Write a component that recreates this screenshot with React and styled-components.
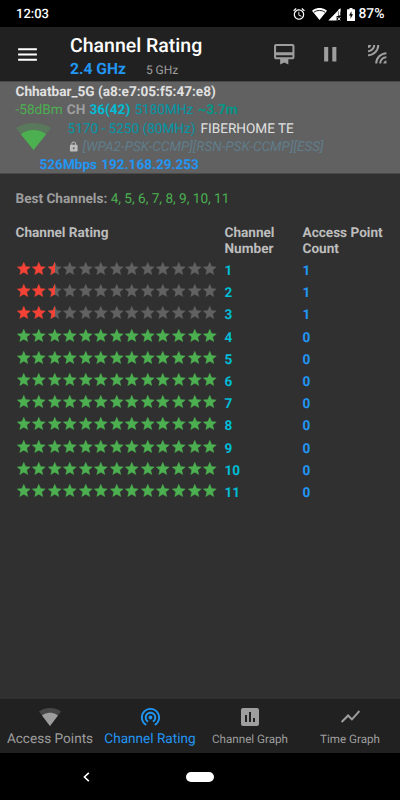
import React from 'react'
import styled, { createGlobalStyle } from 'styled-components'
import {
    MdMenu,
    MdOutlineCardMembership,
    MdPause,
    MdLeakAdd,
    MdAlarm,
    MdLock,
    MdWifiTethering,
    MdInsertChart,
    MdShowChart,
} from 'react-icons/md'

const GlobalStyle = createGlobalStyle`
    * {
        box-sizing: border-box;
    }

    body {
        margin: 0;
        background-color: #000;
        font-family: Roboto, sans-serif;
        text-rendering: geometricPrecision;
    }

    svg {
        display: block;
        flex: none;
    }
`

const Screen = styled.div`
    width: 400px;
    height: 800px;
    display: flex;
    flex-direction: column;
    overflow: hidden;
    background-color: #303030;
    white-space: nowrap;
`

const StatusBar = styled.header`
    height: 27px;
    flex: none;
    display: flex;
    align-items: center;
    padding: 1px 15.5px 0 16px;
    background-color: #000;
    color: #fff;
    font-size: 13px;
    font-weight: 500;
`

const StatusIcons = styled.div`
    display: flex;
    align-items: center;
    margin-left: auto;
`

const StatusGap = styled.span`
    width: ${({ $width }) => $width}px;
`

const Battery = styled.span`
    margin-left: 3.5px;
    font-size: 13.9px;
`

const Toolbar = styled.div`
    height: 54px;
    flex: none;
    display: flex;
    align-items: center;
    padding: 0 11px 0 15px;
    background-color: #212121;
    color: #9e9e9e;
`

const MenuButton = styled.div`
    width: 55px;
    color: #fff;
`

const Titles = styled.div`
    flex: 1;
    align-self: flex-start;
    padding-top: 7px;
`

const Title = styled.div`
    color: #fff;
    font-size: 19.5px;
    font-weight: 500;
    line-height: 24px;
`

const Bands = styled.div`
    display: flex;
    align-items: baseline;
    gap: 20px;
    line-height: 23px;
`

const Band = styled.span`
    color: ${({ $active }) => ($active ? '#2196f3' : '#9e9e9e')};
    font-size: ${({ $active }) => ($active ? '15.6px' : '12px')};
    font-weight: ${({ $active }) => ($active ? 700 : 400)};
`

const Actions = styled.div`
    display: flex;
    align-items: center;
    gap: 22px;
`

const Connection = styled.section`
    height: 93px;
    flex: none;
    padding: 1px 15.5px 0;
    background-color: #616161;
    border-top: 1px solid #484848;
    border-bottom: 1px solid #4a4a4a;
    font-size: 13.6px;
    line-height: 18.2px;
`

const InfoLine = styled.div`
    height: 18.3px;
    display: flex;
    align-items: center;
    gap: ${({ $gap }) => $gap || '4.2px'};
    padding-left: ${({ $indent }) => $indent || 0};
`

const InfoBody = styled.div`
    display: flex;
`

const SignalBox = styled.div`
    width: 52px;
    padding-top: 3px;
`

const Ink = styled.span`
    color: ${({ $color }) => $color};
    font-weight: ${({ $bold }) => ($bold ? 700 : 400)};
    font-style: ${({ $italic }) => ($italic ? 'italic' : 'normal')};
`

const Content = styled.main`
    flex: 1;
    padding: 16px 15.5px 0;
    color: #bdbdbd;
    font-size: 13.6px;
`

const BestChannels = styled.div`
    line-height: 18px;
    margin-bottom: 17px;
`

const Grid = styled.div`
    display: grid;
    grid-template-columns: 209px 78px 1fr;
`

const HeadCell = styled.div`
    height: 36px;
    padding-top: 1px;
    font-weight: 700;
    line-height: 15.7px;
`

const Stars = styled.div`
    height: 22.2px;
    display: flex;
`

const StarBox = styled.div`
    width: 15.56px;
    height: 15.56px;
    position: relative;
    color: ${({ $color }) => $color};
`

const HalfStar = styled.div`
    position: absolute;
    top: 0;
    left: 0;
    width: 56%;
    overflow: hidden;
    color: #f44336;
`

const NumberCell = styled.div`
    height: 22.2px;
    color: ${({ $color }) => $color};
    font-weight: 700;
    line-height: 20px;
`

const BottomNav = styled.nav`
    height: 54px;
    flex: none;
    display: grid;
    grid-template-columns: repeat(4, 100px);
    background-color: #212121;
`

const NavItem = styled.div`
    display: flex;
    flex-direction: column;
    align-items: center;
    justify-content: space-between;
    padding: ${({ $top }) => $top || '6px'} 0 4.5px;
    color: ${({ $active }) => ($active ? '#2196f3' : '#9e9e9e')};
    font-size: ${({ $small }) => ($small ? '11.65px' : '13.6px')};
    line-height: 20px;
`

const SystemNav = styled.footer`
    height: 47px;
    flex: none;
    display: flex;
    align-items: center;
    padding: 0 0 0 82px;
    background-color: #000;
`

const HomePill = styled.div`
    width: 28px;
    height: 10px;
    margin-left: 96px;
    border-radius: 5px;
    background-color: #fff;
`

const GREEN = '#4caf50'
const STAR_COUNT = 13

const channels = [
    { number: 1, rating: 2.5, count: 1 },
    { number: 2, rating: 2.5, count: 1 },
    { number: 3, rating: 2.5, count: 1 },
    ...[4, 5, 6, 7, 8, 9, 10, 11].map((number) => ({ number, rating: 13, count: 0 })),
]

// wifi fan: faded full wedge with the current level on top
function WifiFan({ width, height }) {
    return (
        <svg width={width} height={height} viewBox="0 0 24 19" preserveAspectRatio="none" fill="currentColor">
            <path d="M12 19L24 3.6C23.5 3.2 19 0 12 0S.5 3.2 0 3.6z" fillOpacity="0.3" />
            <path d="M12 19L20.7 8C20.3 7.7 17 5 12 5S3.7 7.7 3.3 8z" />
        </svg>
    )
}

function StatusWifiIcon() {
    return (
        <svg width="15" height="12" viewBox="0 0 15 12">
            <path d="M7.5 12L15 2.7C14.6 2.4 12 0 7.5 0S.4 2.4 0 2.7z" fill="#fff" />
            <path d="M2 4.2C5 1.9 10 1.9 13 4.2" fill="none" stroke="#000" strokeWidth="0.9" />
        </svg>
    )
}

function SignalIcon() {
    return (
        <svg width="13" height="13" viewBox="0 0 13 13">
            <path d="M12.5 0v3.5h-2.2V8H8.6v4.5H.3z" fill="#fff" />
            <path d="M11.5 1v6.5" stroke="#fff" strokeWidth="1.6" />
            <path d="M9.6 9.3l2.8 3M12.4 9.3l-2.8 3" stroke="#fff" strokeWidth="1" />
        </svg>
    )
}

function BatteryIcon() {
    return (
        <svg width="8" height="13" viewBox="0 0 8 13">
            <path d="M2.5 0h3v1.3H7.5q.5 0 .5.5v10.7q0 .5-.5.5h-7q-.5 0-.5-.5V1.8q0-.5.5-.5h2z" fill="#fff" />
            <path d="M4.5 3.2L2 7.6h1.5v3.1l2.5-4.4H4.5z" fill="#000" />
        </svg>
    )
}

function Star() {
    return (
        <svg width="15.56" height="15.56" viewBox="0 0 24 24" fill="currentColor" stroke="currentColor" strokeWidth="0.7">
            <path d="M12 17.27L18.18 21l-1.64-7.03L22 9.24l-7.19-.61L12 2 9.19 8.63 2 9.24l5.46 4.73L5.82 21z" />
        </svg>
    )
}

function StarRow({ rating }) {
    const full = rating === STAR_COUNT ? GREEN : '#f44336'

    return (
        <Stars>
            {Array.from({ length: STAR_COUNT }, (_, i) => (
                <StarBox key={i} $color={i + 1 <= rating ? full : '#616161'}>
                    <Star />
                    {rating - i === 0.5 && (
                        <HalfStar>
                            <Star />
                        </HalfStar>
                    )}
                </StarBox>
            ))}
        </Stars>
    )
}

const App = () => {
    return (
        <Screen>
            <GlobalStyle />
            <StatusBar>
                <span>12:03</span>
                <StatusIcons>
                    <MdAlarm size={14} />
                    <StatusGap $width={6} />
                    <StatusWifiIcon />
                    <StatusGap $width={1} />
                    <SignalIcon />
                    <StatusGap $width={6} />
                    <BatteryIcon />
                    <Battery>87%</Battery>
                </StatusIcons>
            </StatusBar>

            <Toolbar>
                <MenuButton>
                    <MdMenu size={25} />
                </MenuButton>
                <Titles>
                    <Title>Channel Rating</Title>
                    <Bands>
                        <Band $active>2.4 GHz</Band>
                        <Band>5 GHz</Band>
                    </Bands>
                </Titles>
                <Actions>
                    <MdOutlineCardMembership size={24.5} />
                    <MdPause size={24.5} />
                    <MdLeakAdd size={24.5} />
                </Actions>
            </Toolbar>

            <Connection>
                <InfoLine>
                    <Ink $color="#e0e0e0" $bold>Chhatbar_5G (a8:e7:05:f5:47:e8)</Ink>
                </InfoLine>
                <InfoLine>
                    <Ink $color={GREEN}>-58dBm</Ink>
                    <Ink $color="#9e9e9e" $bold>CH</Ink>
                    <Ink $color="#00bcd4" $bold>36(42)</Ink>
                    <Ink $color="#0097a7">5180MHz</Ink>
                    <Ink $color="#009688" $bold>~3.7m</Ink>
                </InfoLine>
                <InfoBody>
                    <SignalBox>
                        <Ink as="div" $color={GREEN}>
                            <WifiFan width={35} height={27} />
                        </Ink>
                    </SignalBox>
                    <div>
                        <InfoLine $gap="5px">
                            <Ink $color="#0097a7">5170 - 5250 (80MHz)</Ink>
                            <Ink $color="#e0e0e0">FIBERHOME TE</Ink>
                        </InfoLine>
                        <InfoLine $gap="3.4px">
                            <MdLock size={11.5} color="#bdbdbd" />
                            <Ink $color="#607d8b" $italic>[WPA2-PSK-CCMP][RSN-PSK-CCMP][ESS]</Ink>
                        </InfoLine>
                    </div>
                </InfoBody>
                <InfoLine $indent="24px">
                    <Ink $color="#2196f3" $bold>526Mbps</Ink>
                    <Ink $color="#2196f3" $bold>192.168.29.253</Ink>
                </InfoLine>
            </Connection>

            <Content>
                <BestChannels>
                    <Ink $color="#9e9e9e" $bold>Best Channels: </Ink>
                    <Ink $color={GREEN}>4, 5, 6, 7, 8, 9, 10, 11</Ink>
                </BestChannels>
                <Grid>
                    <HeadCell>Channel Rating</HeadCell>
                    <HeadCell>Channel<br />Number</HeadCell>
                    <HeadCell>Access Point<br />Count</HeadCell>
                    {channels.map(({ number, rating, count }) => (
                        <React.Fragment key={number}>
                            <StarRow rating={rating} />
                            <NumberCell $color="#00bcd4">{number}</NumberCell>
                            <NumberCell $color="#2196f3">{count}</NumberCell>
                        </React.Fragment>
                    ))}
                </Grid>
            </Content>

            <BottomNav>
                <NavItem $top="9px">
                    <WifiFan width={22} height={18} />
                    Access Points
                </NavItem>
                <NavItem $active>
                    <MdWifiTethering size={23} />
                    Channel Rating
                </NavItem>
                <NavItem $small>
                    <MdInsertChart size={24} />
                    Channel Graph
                </NavItem>
                <NavItem $small>
                    <MdShowChart size={23} />
                    Time Graph
                </NavItem>
            </BottomNav>

            <SystemNav>
                <svg width="8" height="10" viewBox="0 0 8 10" fill="none" stroke="#fff" strokeWidth="1.6">
                    <path d="M6.8 .8L2.4 5l4.4 4.2" />
                </svg>
                <HomePill />
            </SystemNav>
        </Screen>
    )
}

export default App
